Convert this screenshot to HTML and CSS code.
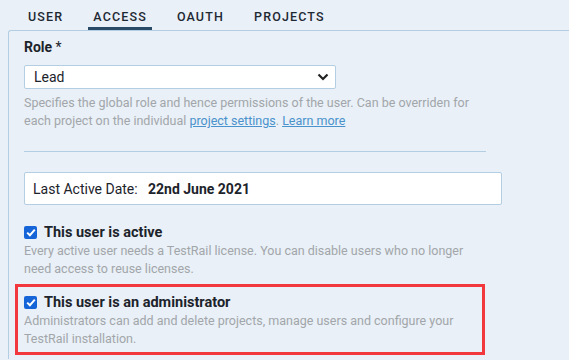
FILE: index.html
```html
<!DOCTYPE html>
<html>
<head>
<meta charset="utf-8">
<link rel="stylesheet" href="styles.css">
</head>
<body>
<nav class="tabs">
  <a class="tab">USER</a>
  <a class="tab active">ACCESS</a>
  <a class="tab">OAUTH</a>
  <a class="tab">PROJECTS</a>
</nav>
<section class="panel">
  <label class="label">Role<span class="req"> *</span></label>
  <div class="select">
    <span class="select-value">Lead</span>
    <svg class="chev" width="12" height="8" viewBox="0 0 12 8"><path d="M1.5 1.5 L6 6 L10.5 1.5" fill="none" stroke="#222" stroke-width="2.2"/></svg>
  </div>
  <div class="help">
    <span class="line">Specifies the global role and hence permissions of the user. Can be overriden for</span>
    <span class="line"><span>each project on the individual </span><a class="link">project settings</a><span>. </span><a class="link">Learn more</a></span>
  </div>
  <hr class="rule">
  <div class="info-box">
    <span class="info-label">Last Active Date:</span>
    <span class="info-value">22nd June 2021</span>
  </div>
  <div class="check-group">
    <div class="check-row">
      <span class="checkbox"><svg width="10" height="9" viewBox="0 0 10 9"><path d="M1.2 4.6 L3.9 7.2 L8.8 1.6" fill="none" stroke="#fff" stroke-width="2"/></svg></span>
      <span class="check-title">This user is active</span>
    </div>
    <div class="help">
      <span class="line">Every active user needs a TestRail license. You can disable users who no longer</span>
      <span class="line">need access to reuse licenses.</span>
    </div>
  </div>
  <div class="check-group highlight">
    <div class="check-row">
      <span class="checkbox"><svg width="10" height="9" viewBox="0 0 10 9"><path d="M1.2 4.6 L3.9 7.2 L8.8 1.6" fill="none" stroke="#fff" stroke-width="2"/></svg></span>
      <span class="check-title">This user is an administrator</span>
    </div>
    <div class="help">
      <span class="line">Administrators can add and delete projects, manage users and configure your</span>
      <span class="line">TestRail installation.</span>
    </div>
  </div>
</section>
</body>
</html>
```
FILE: styles.css
```css
html, body {
  margin: 0;
  padding: 0;
  background: #e9f0f7;
  font-family: Roboto, "Liberation Sans", sans-serif;
  color: #1c232b;
  height: 100%;
  overflow: hidden;
}
.tabs {
  display: flex;
  gap: 20px;
  padding-left: 23px;
  height: 30px;
}
.tab {
  padding: 4px 5px 0;
  height: 30px;
  box-sizing: border-box;
  line-height: 26px;
  font-size: 12.5px;
  font-weight: 500;
  letter-spacing: 1.15px;
  color: #1e2833;
}
.tab.active {
  border-bottom: 3px solid #2a4b68;
}
.panel {
  margin-left: 8px;
  border-left: 1px solid #b3cde3;
  border-top: 1px solid #b3cde3;
  border-top-left-radius: 3px;
  padding: 7px 0 0 15px;
  height: calc(100vh - 31px);
  box-sizing: border-box;
}
.label {
  display: block;
  font-size: 14px;
  font-weight: 700;
  line-height: 19px;
  margin-bottom: 8px;
}
.req { font-weight: 400; }
.select {
  width: 312px;
  height: 24px;
  box-sizing: border-box;
  background: #fff;
  border: 1px solid #b3cde3;
  border-radius: 2px;
  display: flex;
  align-items: center;
  justify-content: space-between;
  padding: 0 6px 0 9px;
  font-size: 14px;
}
.help {
  margin: 5px 0 0;
  font-size: 12.5px;
  line-height: 18px;
  color: #a2a6aa;
}
.line {
  display: block;
  white-space: nowrap;
}
.link {
  color: #4a92cc;
  text-decoration: underline;
}
.rule {
  margin: 21px 0 0;
  border: 0;
  border-top: 1px solid #b3cde3;
  width: 462px;
}
.info-box {
  margin-top: 20px;
  width: 478px;
  height: 33px;
  box-sizing: border-box;
  background: #fff;
  border: 1px solid #b3cde3;
  border-radius: 2px;
  display: flex;
  align-items: center;
  padding-left: 8px;
  font-size: 14px;
}
.info-label { width: 115px; }
.info-value { font-weight: 700; }
.check-group {
  margin-top: 17px;
}
.check-row {
  display: flex;
  align-items: center;
  gap: 7px;
  height: 20px;
}
.checkbox {
  width: 13px;
  height: 13px;
  border-radius: 2px;
  background: #1565d8;
  display: flex;
  align-items: center;
  justify-content: center;
}
.check-title {
  font-size: 14.5px;
  font-weight: 700;
}
.check-group .help { margin-top: 0; }
.highlight {
  margin-top: 6px;
  margin-left: -9px;
  width: 470px;
  box-sizing: border-box;
  border: 3px solid #f2383d;
  padding: 5px 0 4px 6px;
}
```
